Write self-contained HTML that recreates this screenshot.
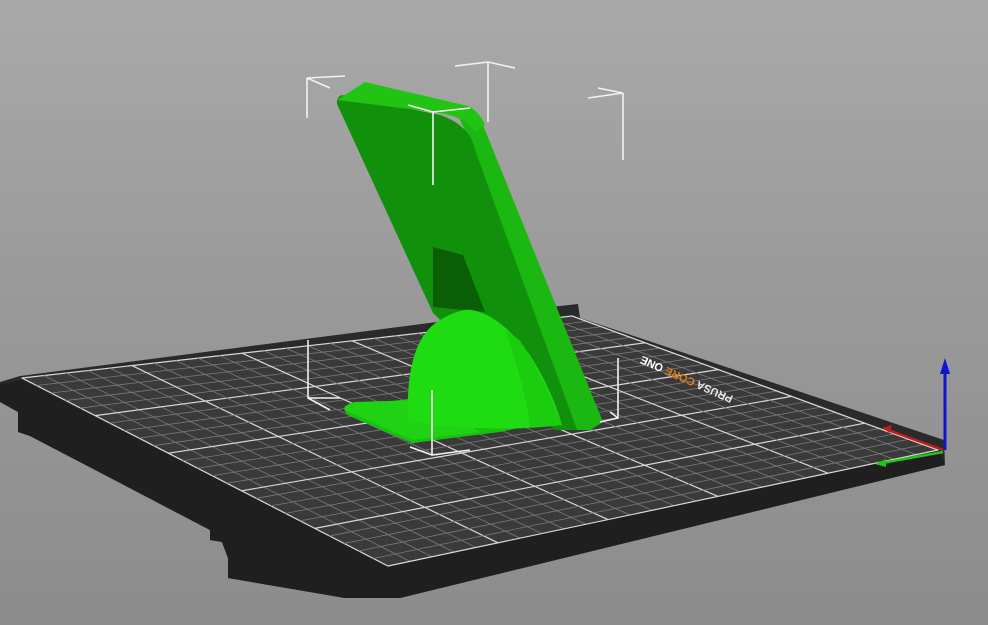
<!DOCTYPE html>
<html><head><meta charset="utf-8"><style>
html,body{margin:0;padding:0;width:988px;height:625px;overflow:hidden}
body{background:linear-gradient(#a9a9a9 0%,#9a9a9a 45%,#8c8c8c 100%)}
svg{position:absolute;left:0;top:0}
</style></head><body>
<svg width="988" height="625" viewBox="0 0 988 625" xmlns="http://www.w3.org/2000/svg">
<polygon fill="#2a2a2a" points="0,382 20,376 560,306 578,304 580,318 944,440 945,465 400,598 345,598 228,578 228,558 222,542 210,540 210,530 30,436 18,432 18,412 0,402"/>
<polygon fill="#1f1f1f" points="22,380 388,566 940,450 945,465 400,598 345,598 228,578 228,558 222,542 210,540 210,530 30,436 18,432 18,412 0,402 0,384"/>
<polygon id="top" fill="#3a3a3a" points="22,378 572,316 938,450 388,566"/>
<g id="grid" stroke-linecap="round"></g>
<g transform="translate(688,376) rotate(24)">
<text x="0" y="0" font-family="Liberation Sans, sans-serif" font-size="11" font-weight="bold" fill="#e8e8e8" text-anchor="middle" transform="scale(-1,-1)">PRUSA <tspan fill="#e07a1c">CORE</tspan> <tspan fill="#fff">ONE</tspan></text>
</g>
<g stroke="#f2f2f2" stroke-width="1.6" fill="none">
<path d="M307,78 L345,76 M307,78 L330,88 M307,78 L307,118"/>
<path d="M455,66 L488,62 L515,68 M488,62 L488,122"/>
<path d="M588,98 L623,93 M623,93 L623,160 M598,88 L623,93"/>
<path d="M308,340 L308,398 L340,398 M308,398 L330,410"/>
</g>
<path d="M345,406 Q342,412 352,417 L412,443 L500,432 L555,420 L540,405 L420,398 Z" fill="#17c20d"/>
<path d="M355,402 Q343,405 345,410 L412,440 L480,432 L420,400 Z" fill="#20d214"/>
<path d="M455,110 Q478,115 485,130 L603,422 L590,430 L577,430 L470,140 Z" fill="#1ab810"/>
<path d="M337,104 Q336,97 342,95 L440,115 Q470,125 475,150 L577,430 L555,430 L433,313 Z" fill="#10900b"/>
<path d="M337,100 L365,82 L468,106 Q480,112 485,125 L475,132 Q468,118 440,113 Z" fill="#22c414"/>
<polygon points="433,247 463,255 485,312 433,307" fill="#0a5f06"/>
<path d="M408,420 Q405,340 440,320 Q460,308 472,310 Q500,315 530,355 Q552,390 562,425 Q520,430 480,428 Q440,428 408,420 Z" fill="#1fdc12"/>
<path d="M520,340 Q545,380 562,425 L530,427 Q525,385 505,330 Z" fill="#19c90f" opacity=".8"/>
<g stroke="#f2f2f2" stroke-width="1.6" fill="none">
<path d="M408,105 L433,112 L470,108 M433,112 L433,185"/>
<path d="M432,390 L432,455 L470,450 M432,455 L410,447"/>
<path d="M618,358 L618,418 L600,422 M618,418 L610,412"/>
</g>
<line x1="943" y1="450" x2="888" y2="430" stroke="#c41c1c" stroke-width="2.5"/>
<polygon points="882,428 892,425 890,433" fill="#c41c1c"/>
<line x1="943" y1="452" x2="882" y2="463" stroke="#22c41a" stroke-width="2.5"/>
<polygon points="875,464 886,459 886,467" fill="#22c41a"/>
<line x1="945" y1="450" x2="945" y2="372" stroke="#1414cc" stroke-width="3"/>
<polygon points="945,358 940,374 950,374" fill="#1414cc"/>
</svg>
<script>
(function(){
var A=[22,378],B=[572,316],C=[938,450],D=[388,566],N=25,g=document.getElementById('grid'),s='';
function P(u,v){var x=(1-u)*(1-v)*A[0]+u*(1-v)*B[0]+u*v*C[0]+(1-u)*v*D[0];var y=(1-u)*(1-v)*A[1]+u*(1-v)*B[1]+u*v*C[1]+(1-u)*v*D[1];return [x,y];}
for(var i=0;i<=N;i++){var t=i/N,maj=(i%5==0);var c=maj?'#d8d8d8':'#7a7a7a',w=maj?1.2:0.8;
var p=P(t,0),q=P(t,1);s+='<line x1="'+p[0]+'" y1="'+p[1]+'" x2="'+q[0]+'" y2="'+q[1]+'" stroke="'+c+'" stroke-width="'+w+'"/>';
p=P(0,t);q=P(1,t);s+='<line x1="'+p[0]+'" y1="'+p[1]+'" x2="'+q[0]+'" y2="'+q[1]+'" stroke="'+c+'" stroke-width="'+w+'"/>';}
g.innerHTML=s;
})();
</script>
</body></html>
